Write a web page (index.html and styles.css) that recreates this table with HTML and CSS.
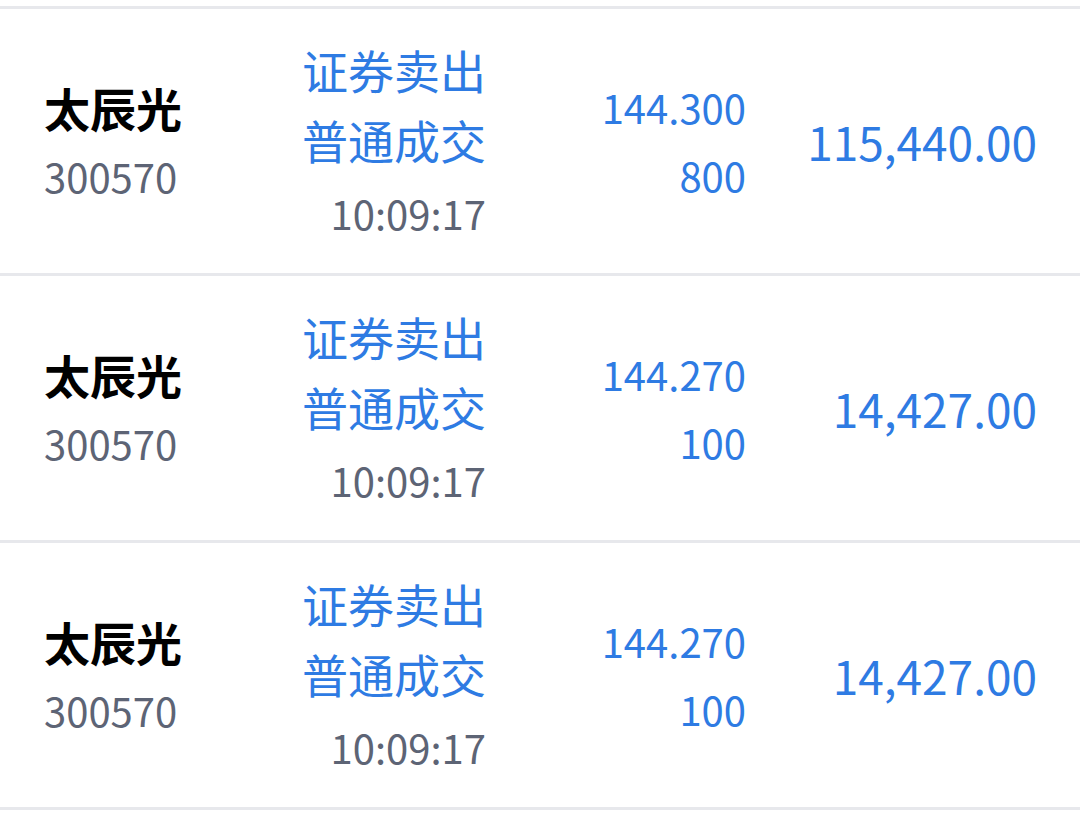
FILE: index.html
```html
<!DOCTYPE html>
<html lang="zh-CN">
<head>
<meta charset="utf-8">
<link rel="stylesheet" href="styles.css">
</head>
<body>
<div class="list">
  <div class="row">
    <div class="stock"><div class="name">太辰光</div><div class="code">300570</div></div>
    <div class="trade"><div class="cn">证券卖出</div><div class="cn">普通成交</div><div class="time">10:09:17</div></div>
    <div class="deal"><div class="num">144.300</div><div class="num">800</div></div>
    <div class="amount">115,440.00</div>
  </div>
  <div class="row">
    <div class="stock"><div class="name">太辰光</div><div class="code">300570</div></div>
    <div class="trade"><div class="cn">证券卖出</div><div class="cn">普通成交</div><div class="time">10:09:17</div></div>
    <div class="deal"><div class="num">144.270</div><div class="num">100</div></div>
    <div class="amount">14,427.00</div>
  </div>
  <div class="row">
    <div class="stock"><div class="name">太辰光</div><div class="code">300570</div></div>
    <div class="trade"><div class="cn">证券卖出</div><div class="cn">普通成交</div><div class="time">10:09:17</div></div>
    <div class="deal"><div class="num">144.270</div><div class="num">100</div></div>
    <div class="amount">14,427.00</div>
  </div>
</div>
</body>
</html>
```
FILE: styles.css
```css
html, body {
  margin: 0;
  padding: 0;
  background: #ffffff;
}
body {
  font-family: "Noto Sans CJK SC", "Noto Sans", sans-serif;
  width: 1080px;
  height: 831px;
  overflow: hidden;
}
.list {
  padding-top: 6px;
}
.row {
  display: grid;
  grid-template-columns: 228px 214px 260px 1fr;
  align-items: center;
  height: 264px;
  padding: 0 43px 0 44px;
  border-bottom: 3px solid #e7e8ec;
}
.row:first-child {
  border-top: 3px solid #e7e8ec;
}
.stock {
  display: flex;
  flex-direction: column;
  gap: 6px;
  padding-bottom: 6px;
}
.name {
  font-size: 46px;
  font-weight: 700;
  color: #000000;
  line-height: 70px;
}
.code {
  font-size: 40px;
  color: #5d6475;
  line-height: 56px;
}
.trade {
  display: flex;
  flex-direction: column;
  align-items: flex-end;
  padding-bottom: 5px;
}
.cn {
  font-size: 46px;
  color: #2e7be3;
  line-height: 70px;
}
.time {
  font-size: 40px;
  color: #5d6475;
  line-height: 60px;
  margin-top: 9px;
}
.deal {
  display: flex;
  flex-direction: column;
  align-items: flex-end;
}
.num {
  font-size: 40px;
  color: #2e7be3;
  line-height: 68px;
}
.amount {
  text-align: right;
  font-size: 46px;
  color: #2e7be3;
}
```
